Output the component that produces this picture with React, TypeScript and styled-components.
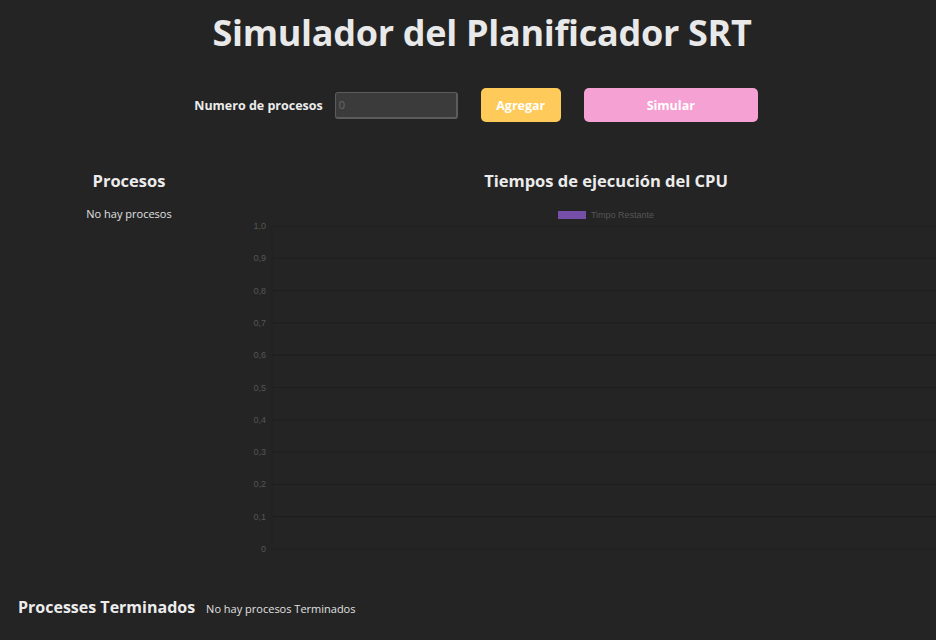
import React from 'react'
import styled, { createGlobalStyle } from 'styled-components'

const GlobalStyle = createGlobalStyle`
  html, body {
    margin: 0;
    padding: 0;
    background: #242424;
    overflow: hidden;
  }
  body {
    font-family: "Open Sans", "Noto Sans", sans-serif;
    color: #e8e8e8;
  }
`

const Page = styled.div`
  width: 936px;
  height: 640px;
  display: flex;
  flex-direction: column;
  overflow: hidden;
`

const Title = styled.h1`
  margin: 10px 0 0;
  padding-left: 28px;
  text-align: center;
  font-size: 36px;
  line-height: 46px;
  font-weight: 700;
  color: #e9e9e9;
  letter-spacing: -0.3px;
`

const Controls = styled.div`
  display: flex;
  align-items: center;
  justify-content: center;
  margin-top: 32px;
  padding-left: 16px;
  height: 34px;
`

const Label = styled.label`
  font-size: 12.5px;
  font-weight: 700;
  color: #ececec;
  margin-right: 12px;
`

const NumberInput = styled.input`
  box-sizing: border-box;
  width: 123px;
  height: 27px;
  background: #3b3b3b;
  border: 1px solid #5c5c5c;
  border-bottom-width: 2px;
  border-right-width: 2px;
  border-radius: 3px;
  color: #777;
  font-family: inherit;
  font-size: 11px;
  padding: 0 3px;
  margin-right: 23px;
  outline: none;
  &::placeholder {
    color: #6a6a6a;
  }
`

const Button = styled.button<{ $bg: string; $w: number }>`
  box-sizing: border-box;
  width: ${p => p.$w}px;
  height: 34px;
  border: none;
  border-radius: 5px;
  background: ${p => p.$bg};
  color: #fff;
  font-family: inherit;
  font-size: 12.5px;
  font-weight: 700;
  & + & {
    margin-left: 23px;
  }
`

const Main = styled.div`
  display: grid;
  grid-template-columns: 240px 732px;
  margin-top: 47px;
`

const Side = styled.div`
  display: flex;
  flex-direction: column;
  align-items: center;
  padding-left: 18px;
`

const SectionTitle = styled.h2<{ $size?: number }>`
  margin: 0;
  font-size: ${p => p.$size ?? 16.5}px;
  line-height: 24px;
  font-weight: 700;
  color: #ececec;
`

const Empty = styled.p`
  margin: 13px 0 0;
  font-size: 11px;
  color: #e0e0e0;
`

const ChartBox = styled.div`
  display: flex;
  flex-direction: column;
  align-items: center;
`

const Legend = styled.div`
  display: flex;
  align-items: center;
  gap: 5px;
  margin-top: 17px;
  font-family: "Liberation Sans", Arial, sans-serif;
  font-size: 9px;
  color: #555;
`

const Swatch = styled.span`
  width: 28px;
  height: 8px;
  background: #7650a8;
`

const Plot = styled.svg`
  display: block;
  align-self: stretch;
`

const Footer = styled.div`
  display: flex;
  align-items: baseline;
  gap: 11px;
  margin-top: auto;
  margin-bottom: 21px;
  padding-left: 18px;
`

const ticks = ['1,0', '0,9', '0,8', '0,7', '0,6', '0,5', '0,4', '0,3', '0,2', '0,1', '0']

const Chart = () => {
  const top = 6
  const step = 32.3
  const left = 32
  return (
    <Plot width={732} height={345}>
      {ticks.map((t, i) => {
        const y = top + i * step
        return (
          <g key={t}>
            <line x1={left} x2={732} y1={y} y2={y} stroke="#1e1e1e" strokeWidth={1} />
            <text
              x={26}
              y={y + 3}
              textAnchor="end"
              fontFamily='"Liberation Sans", Arial, sans-serif'
              fontSize={9}
              fill="#565656"
            >
              {t}
            </text>
          </g>
        )
      })}
      <line x1={left} x2={left} y1={top} y2={top + 10 * step} stroke="#212121" strokeWidth={1} />
    </Plot>
  )
}

export default function App() {
  return (
    <>
      <GlobalStyle />
      <Page>
        <Title>Simulador del Planificador SRT</Title>
        <Controls>
          <Label>Numero de procesos</Label>
          <NumberInput type="number" placeholder="0" />
          <Button $bg="#fecb5a" $w={80}>Agregar</Button>
          <Button $bg="#f6a1d3" $w={174}>Simular</Button>
        </Controls>
        <Main>
          <Side>
            <SectionTitle>Procesos</SectionTitle>
            <Empty>No hay procesos</Empty>
          </Side>
          <ChartBox>
            <SectionTitle>Tiempos de ejecución del CPU</SectionTitle>
            <Legend>
              <Swatch />
              Timpo Restante
            </Legend>
            <Chart />
          </ChartBox>
        </Main>
        <Footer>
          <SectionTitle $size={16}>Processes Terminados</SectionTitle>
          <Empty as="span">No hay procesos Terminados</Empty>
        </Footer>
      </Page>
    </>
  )
}
